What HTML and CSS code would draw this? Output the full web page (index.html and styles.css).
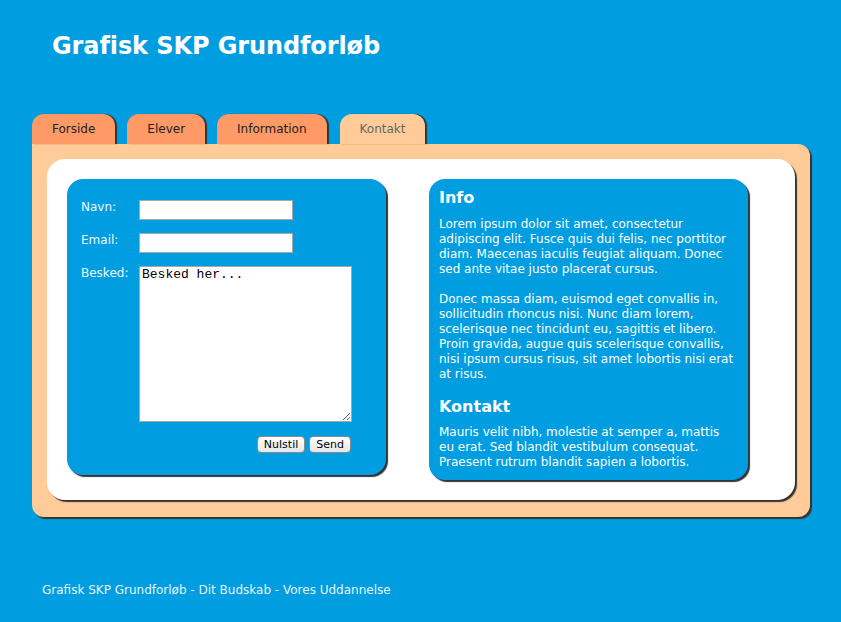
FILE: index.html
```html
<!DOCTYPE html>
<html lang="da">
<head>
<meta charset="utf-8">
<title>Grafisk SKP Grundforløb - Kontakt</title>
<link rel="stylesheet" href="styles.css">
</head>
<body>
<div class="wrap">
  <header class="header">
    <h1>Grafisk SKP Grundforløb</h1>
  </header>
  <nav class="tabs">
    <a class="tab" href="#">Forside</a>
    <a class="tab" href="#">Elever</a>
    <a class="tab" href="#">Information</a>
    <a class="tab active" href="#">Kontakt</a>
  </nav>
  <div class="panel">
    <div class="inner">
      <form class="box form">
        <label class="lbl" for="navn">Navn:</label>
        <input class="field" id="navn" type="text">
        <label class="lbl" for="email">Email:</label>
        <input class="field" id="email" type="text">
        <label class="lbl" for="besked">Besked:</label>
        <textarea class="msg" id="besked">Besked her...</textarea>
        <div class="buttons">
          <button class="btn" type="reset">Nulstil</button>
          <button class="btn" type="submit">Send</button>
        </div>
      </form>
      <div class="box info">
        <h2>Info</h2>
        <p>Lorem ipsum dolor sit amet, consectetur adipiscing elit. Fusce quis dui felis, nec porttitor diam. Maecenas iaculis feugiat aliquam. Donec sed ante vitae justo placerat cursus.</p>
        <p>Donec massa diam, euismod eget convallis in, sollicitudin rhoncus nisi. Nunc diam lorem, scelerisque nec tincidunt eu, sagittis et libero. Proin gravida, augue quis scelerisque convallis, nisi ipsum cursus risus, sit amet lobortis nisi erat at risus.</p>
        <h2>Kontakt</h2>
        <p>Mauris velit nibh, molestie at semper a, mattis eu erat. Sed blandit vestibulum consequat. Praesent rutrum blandit sapien a lobortis.</p>
      </div>
    </div>
  </div>
  <footer class="footer">Grafisk SKP Grundforløb - Dit Budskab - Vores Uddannelse</footer>
</div>
</body>
</html>
```
FILE: styles.css
```css
html, body {
  margin: 0;
  padding: 0;
}
body {
  background: #009ee0;
  font-family: "DejaVu Sans", Verdana, sans-serif;
  font-size: 12px;
  color: #fff;
}
.wrap {
  padding-left: 32px;
  width: 780px;
}
.header {
  height: 114px;
  box-sizing: border-box;
  padding: 32px 0 0 20px;
}
.header h1 {
  margin: 0;
  font-size: 24px;
  line-height: 28px;
  font-weight: bold;
  color: #fff;
  letter-spacing: -0.1px;
}
.tabs {
  display: flex;
  gap: 12px;
  height: 30px;
}
.tab {
  display: block;
  height: 30px;
  box-sizing: border-box;
  line-height: 29px;
  padding: 1px 20px 0 20px;
  background: #ff9966;
  color: #222;
  text-decoration: none;
  border-radius: 12px 12px 0 0;
  box-shadow: 2px 0 1px #333;
  font-size: 12px;
}
.tab.active {
  background: #ffcc99;
  color: #666;
  margin-left: 1px;
}
.panel {
  width: 778px;
  box-sizing: border-box;
  background: #ffcc99;
  border-radius: 0 12px 12px 12px;
  box-shadow: 2px 2px 1px #333;
  padding: 15px 15px 17px 15px;
}
.inner {
  background: #fff;
  border-radius: 18px;
  box-shadow: 2px 2px 1px #333;
  padding: 20px 47px 20px 20px;
  display: flex;
  align-items: flex-start;
  gap: 43px;
}
.box {
  width: 319px;
  box-sizing: border-box;
  background: #009ee0;
  border-radius: 16px;
  box-shadow: 2px 2px 1px #333;
  color: #fff;
}
.form {
  display: grid;
  grid-template-columns: 58px auto;
  row-gap: 13px;
  padding: 21px 14px 22px 14px;
  margin: 0;
}
.lbl {
  font-size: 12px;
  line-height: 15px;
  color: #eef8ff;
}
.field {
  width: 154px;
  height: 20px;
  box-sizing: border-box;
  border: 1px solid #a8a8a8;
  background: #fff;
  margin: 0;
  padding: 1px 3px;
}
.msg {
  width: 213px;
  height: 156px;
  box-sizing: border-box;
  border: 1px solid #a8a8a8;
  margin: 0;
  padding: 1px 2px;
  font-family: "Liberation Mono", "Courier New", monospace;
  font-size: 13px;
  line-height: 13px;
  color: #000;
}
.buttons {
  grid-column: 2;
  width: 212px;
  display: flex;
  justify-content: flex-end;
  gap: 4px;
  margin-top: 1px;
}
.btn {
  height: 17px;
  padding: 0 6px;
  font-family: "DejaVu Sans", sans-serif;
  font-size: 11px;
  line-height: 15px;
  color: #000;
  background: linear-gradient(#ffffff, #e6e6e6);
  border: 1px solid #8a8a8a;
  border-radius: 4px;
}
.info {
  padding: 9px 10px 10px 10px;
}
.info h2 {
  margin: 0 0 9px;
  font-size: 16px;
  line-height: 20px;
  font-weight: bold;
}
.info p {
  margin: 0 0 15px;
  font-size: 12px;
  line-height: 15px;
}
.info p:last-child {
  margin-bottom: 0;
}
.info p + h2 {
  margin-top: 6px;
}
.info p + h2 + p {
  margin-top: -1px;
}
.footer {
  margin-top: 66px;
  padding-left: 10px;
  font-size: 12px;
  line-height: 15px;
  color: #e6f4fb;
}
```
